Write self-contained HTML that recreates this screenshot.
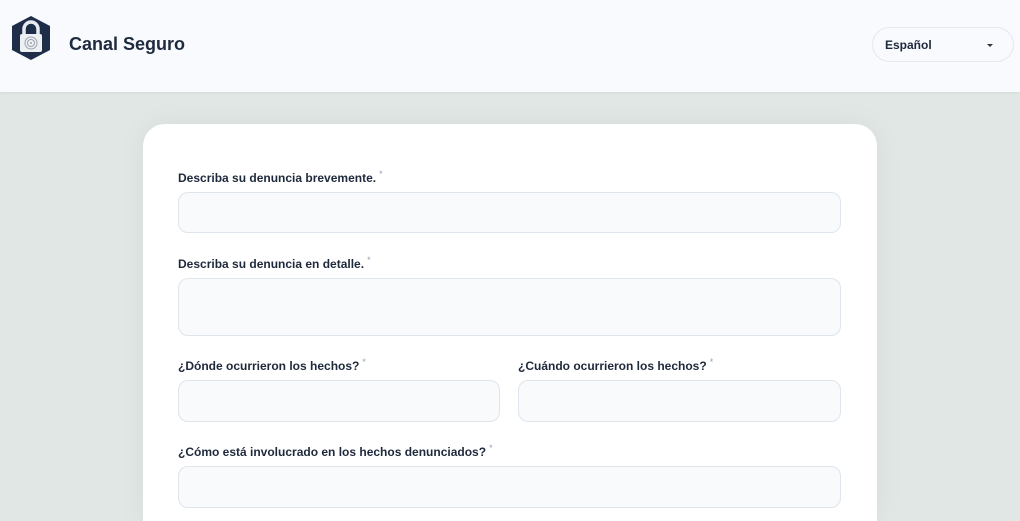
<!DOCTYPE html>
<html><head><meta charset="utf-8"><style>
*{box-sizing:border-box;margin:0;padding:0}
html,body{width:1020px;height:521px;overflow:hidden}
body{background:#e1e7e4;font-family:"Liberation Sans",sans-serif;position:relative}
.hdr{position:absolute;left:0;top:0;width:1020px;height:92px;background:#f9fafd;box-shadow:0 1px 3px rgba(0,0,0,.06)}
.title{position:absolute;left:69px;top:34px;font-size:18px;font-weight:bold;color:#1e2a3e}
.sel{position:absolute;left:872px;top:27px;width:142px;height:35px;border:1px solid #e2e8f0;border-radius:18px;background:#f9fafd}
.sel span{position:absolute;left:12px;top:10px;font-size:12px;font-weight:bold;color:#1e293b}
.sel i{position:absolute;right:20px;top:16px;border:3px solid transparent;border-top:3px solid #333}
.card{position:absolute;left:143px;top:124px;width:734px;height:397px;background:#fff;border-radius:22px 22px 0 0;box-shadow:0 0 30px rgba(0,0,0,.05)}
.lb{position:absolute;font-size:12px;font-weight:bold;color:#1e293b}
.lb sup{color:#94a3b8;font-weight:normal;font-size:9px;margin-left:3px}
.in{position:absolute;background:#f8fafc;border:1px solid #dfe5ec;border-radius:10px}
</style></head><body>
<div class="hdr">
<svg style="position:absolute;left:10px;top:15px" width="42" height="46" viewBox="0 0 42 46"><path d="M21 1 L40 11 V35 L21 45 L2 35 V11Z" fill="#1e2d48"/><path d="M14 19 V14 a7 7 0 0 1 14 0 V19" stroke="#e8ecf0" stroke-width="3.5" fill="none"/><rect x="10" y="19" width="22" height="18" rx="2" fill="#eef1f4"/><circle cx="21" cy="28" r="6" fill="none" stroke="#9aa3ad" stroke-width="1"/><circle cx="21" cy="28" r="3.5" fill="none" stroke="#9aa3ad" stroke-width="1"/><circle cx="21" cy="28" r="1" fill="#9aa3ad"/></svg>
<div class="title">Canal Seguro</div>
<div class="sel"><span>Español</span><i></i></div>
</div>
<div class="card"></div>
<div class="lb" style="left:178px;top:169px">Describa su denuncia brevemente.<sup>*</sup></div>
<div class="in" style="left:178px;top:192px;width:663px;height:41px"></div>
<div class="lb" style="left:178px;top:255px">Describa su denuncia en detalle.<sup>*</sup></div>
<div class="in" style="left:178px;top:278px;width:663px;height:58px"></div>
<div class="lb" style="left:178px;top:357px">¿Dónde ocurrieron los hechos?<sup>*</sup></div>
<div class="in" style="left:178px;top:380px;width:322px;height:42px"></div>
<div class="lb" style="left:518px;top:357px">¿Cuándo ocurrieron los hechos?<sup>*</sup></div>
<div class="in" style="left:518px;top:380px;width:323px;height:42px"></div>
<div class="lb" style="left:178px;top:443px">¿Cómo está involucrado en los hechos denunciados?<sup>*</sup></div>
<div class="in" style="left:178px;top:466px;width:663px;height:42px"></div>
</body></html>
